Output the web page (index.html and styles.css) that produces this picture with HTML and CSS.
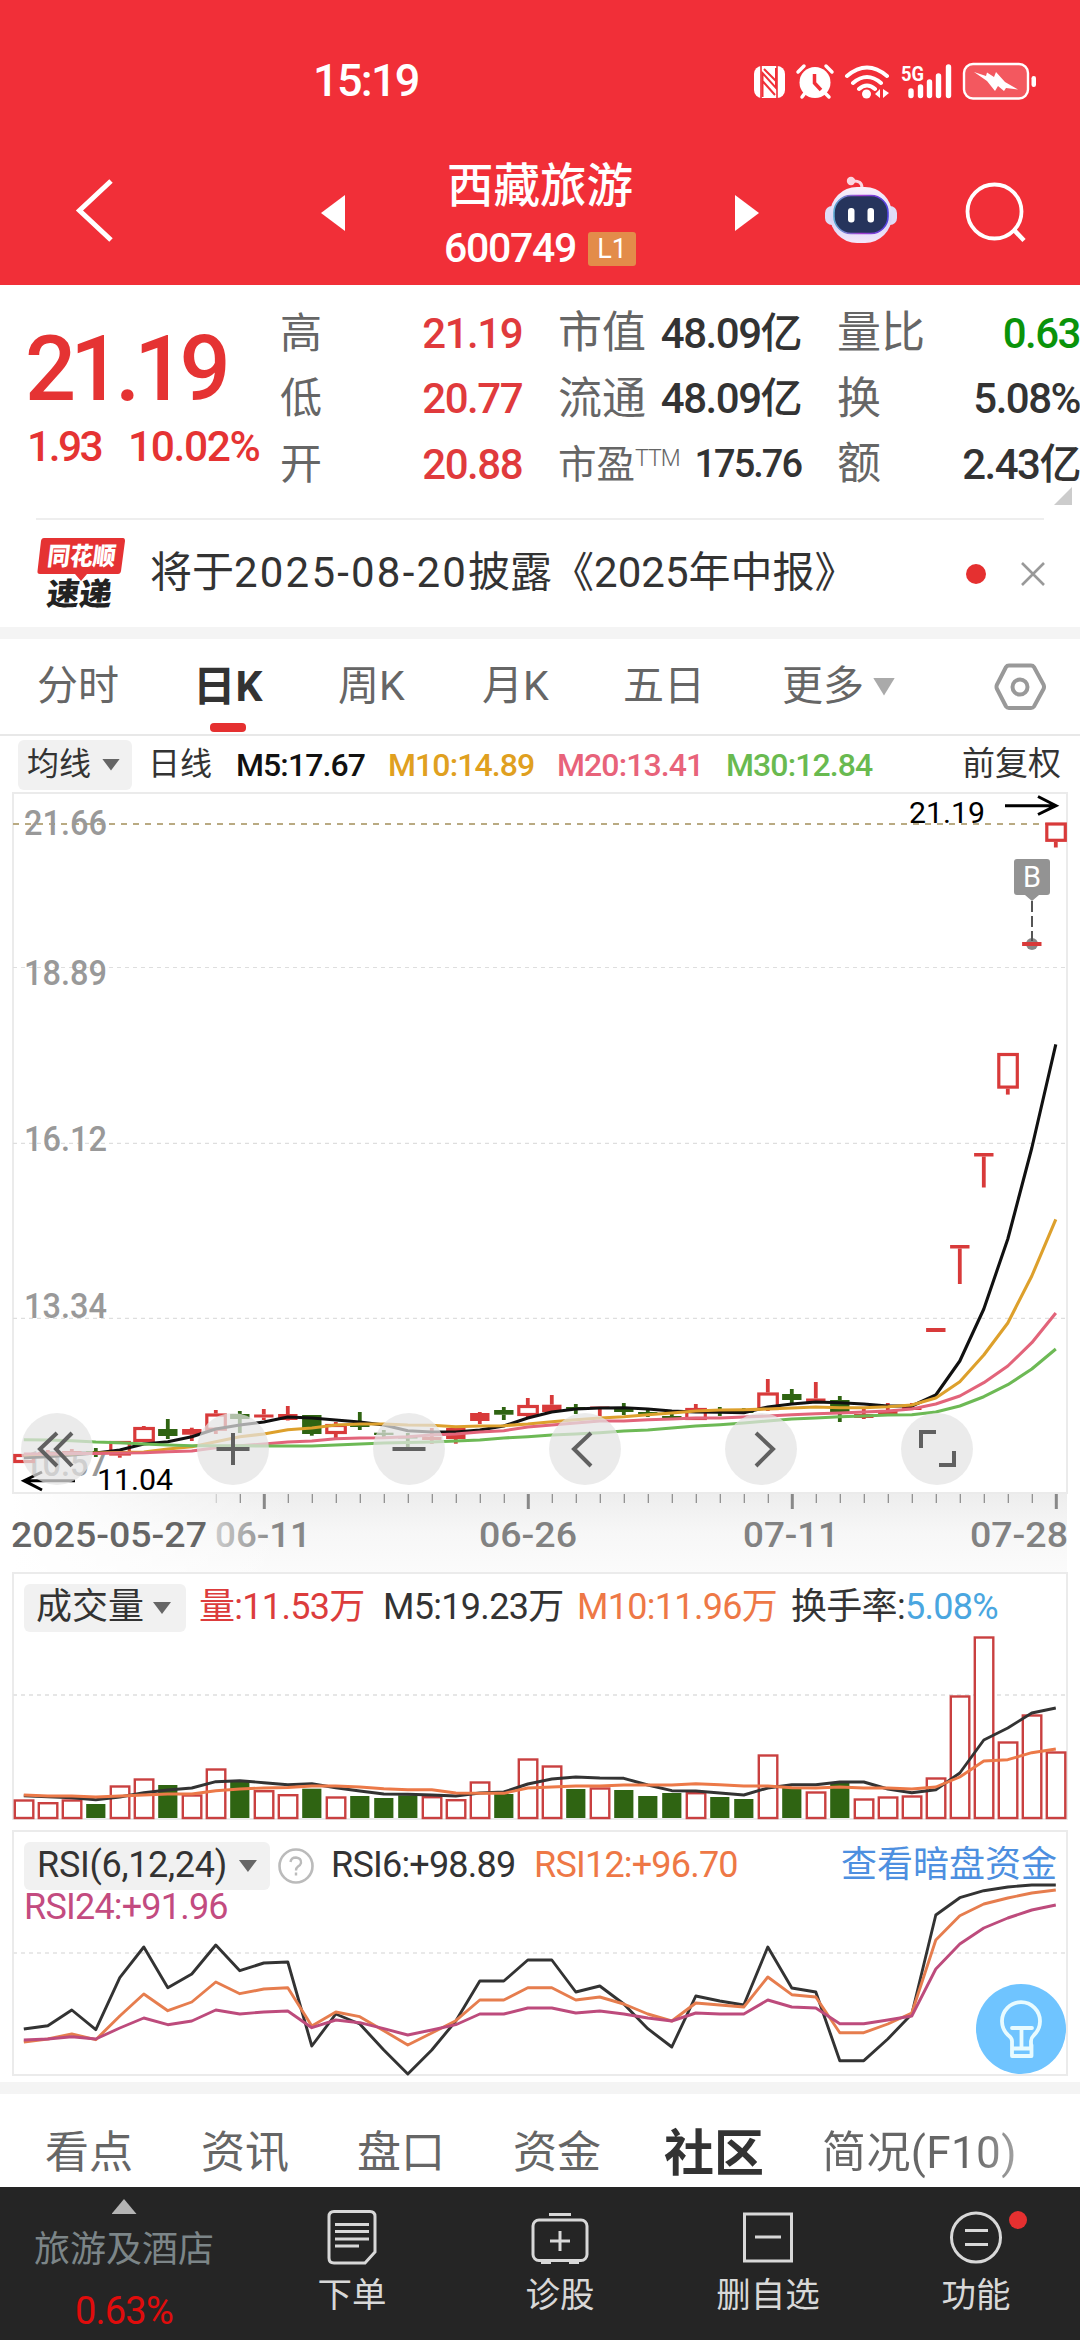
FILE: index.html
```html
<!DOCTYPE html>
<html lang="zh-CN">
<head>
<meta charset="utf-8">
<title>西藏旅游 600749</title>
<link rel="stylesheet" href="styles.css">
</head>
<body>
<header class="header">
  <div class="status">
    <span class="clock">15:19</span>
    <svg class="status-icons" viewBox="750 56 290 48" width="290" height="48">
      <g fill="#fff">
        <rect x="754" y="65" width="31" height="32" rx="8"/>
        <path d="M761 65V97M777 65V97" stroke="#f12f38" stroke-width="1.6"/>
        <path d="M762.500 96V72L776 87V67M762.500 80L775 94M764 68L776 80" fill="none" stroke="#f12f38" stroke-width="2"/>
        <circle cx="815" cy="81.500" r="15.500"/>
        <path d="M798 71L804 65M832 71L826 65M805 92L802 96M825 92L829 96" stroke="#fff" stroke-width="3.500" stroke-linecap="round"/>
        <path d="M814.500 73V82L821 89" fill="none" stroke="#f12f38" stroke-width="3.500"/>
        <path d="M847 75Q867 58 887 75M853 82Q867 70 881 82M859 88Q867 81 875 88" fill="none" stroke="#fff" stroke-width="4" stroke-linecap="round"/>
        <circle cx="866.500" cy="93" r="4.500"/>
        <path d="M880 88V97L875 93ZM883 97V88L889 92Z"/>
        <path d="M911 90V94.500M920.500 86V94.500M929.500 81V94.500M938.500 75V94.500M948.500 66V94.500" stroke="#fff" stroke-width="5.400" stroke-linecap="round"/>
        <text x="901" y="79.500" font-size="21" font-weight="700" textLength="23" lengthAdjust="spacingAndGlyphs">5G</text>
        <rect x="964" y="63" width="64" height="34.500" rx="9" fill="#fff" fill-opacity=".2" stroke="#fff" stroke-width="2.400"/>
        <rect x="1031.500" y="75" width="4.500" height="11" rx="2.200"/>
        <path d="M974 71L986 75L987 71.500L994 76L996 71L1005 81L1018 88.500L1006 87L1004 90L998 85L995 90L987 80Z"/>
      </g>
    </svg>
  </div>
  <nav class="titlebar">
    <svg class="back" width="46" height="72" viewBox="72 174 46 72"><path d="M111 181L79.500 210.500L111 240" fill="none" stroke="#fff" stroke-width="5"/></svg>
    <svg class="prev" width="24" height="36" viewBox="0 0 24 36"><path d="M24 0V36L0 18Z" fill="#fff"/></svg>
    <div class="stock">
      <div class="stock-name">西藏旅游</div>
      <div class="stock-code"><span class="code">600749</span><span class="level">L1</span></div>
    </div>
    <svg class="next" width="24" height="36" viewBox="0 0 24 36"><path d="M0 0V36L24 18Z" fill="#fff"/></svg>
    <svg class="robot" width="76" height="72" viewBox="823 174 76 72">
      <defs>
        <linearGradient id="shell" x1="0" y1="0" x2="0" y2="1"><stop offset="0" stop-color="#faf0fa"/><stop offset=".6" stop-color="#d9d6f4"/><stop offset="1" stop-color="#f4e6fa"/></linearGradient>
        <linearGradient id="rim" x1="0" y1="0" x2="1" y2="0"><stop offset="0" stop-color="#59a8d0"/><stop offset=".5" stop-color="#a43dd0"/><stop offset="1" stop-color="#4e43e0"/></linearGradient>
      </defs>
      <path d="M862 188Q862 180 852 181" fill="none" stroke="#fbd6e0" stroke-width="3"/>
      <circle cx="851" cy="181" r="4.200" fill="#fbd6e0"/>
      <rect x="825" y="206" width="72" height="19" rx="7" fill="#e0dcf6"/>
      <rect x="830" y="187" width="62" height="56" rx="27" fill="url(#shell)"/>
      <rect x="834" y="195.500" width="54" height="38" rx="17" fill="#26345c" stroke="url(#rim)" stroke-width="1.600"/>
      <rect x="848" y="208" width="6.500" height="14.500" rx="3" fill="#fff"/><rect x="867.500" y="208" width="6.500" height="14.500" rx="3" fill="#fff"/>
    </svg>
    <svg class="search" width="62" height="64" viewBox="964 180 62 64"><circle cx="994.500" cy="211.500" r="27" fill="none" stroke="#fff" stroke-width="3.800"/><path d="M1014 230L1024 240.500" stroke="#fff" stroke-width="4.500"/></svg>
  </nav>
</header>

<section class="quote">
  <div class="price">
    <div class="last">21.19</div>
    <div class="change"><span class="diff">1.93</span><span class="pct">10.02%</span></div>
  </div>
  <dl class="stats c1"><dt>高</dt><dd>21.19</dd><dt>低</dt><dd>20.77</dd><dt>开</dt><dd>20.88</dd></dl>
  <dl class="stats c2"><dt>市值</dt><dd>48.09亿</dd><dt>流通</dt><dd>48.09亿</dd><dt class="small">市盈<sup>TTM</sup></dt><dd class="small">175.76</dd></dl>
  <dl class="stats c3"><dt>量比</dt><dd class="down">0.63</dd><dt>换</dt><dd>5.08%</dd><dt>额</dt><dd>2.43亿</dd></dl>
  <i class="corner"></i>
</section>

<section class="news">
  <svg class="news-logo" width="90" height="78" viewBox="36 534 90 78">
    <path d="M44 538H123Q125 538 125 541L121 571Q120.500 574 118 574H87L81 581L75 574H40Q37 574 37.500 571L41 541Q41.500 538 44 538Z" fill="#e53233"/>
    <g transform="skewX(-7)"><text x="116" y="565" font-size="25" font-weight="900" fill="#fff" textLength="68" lengthAdjust="spacingAndGlyphs">同花顺</text><text x="120" y="605" font-size="31" font-weight="900" fill="#222" textLength="65" lengthAdjust="spacingAndGlyphs">速递</text></g>
  </svg>
  <p class="news-text">将于<span class="date">2025-08-20</span>披露《2025年中报》</p>
  <i class="dot"></i>
  <svg class="close" width="26" height="26" viewBox="0 0 26 26"><path d="M2 2L24 24M24 2L2 24" stroke="#999" stroke-width="2.600"/></svg>
</section>

<div class="band"></div>

<nav class="periods">
  <span>分时</span><span class="on">日K</span><span>周K</span><span>月K</span><span>五日</span><span class="more">更多<i class="tri light"></i></span>
  <svg class="gear" width="52" height="48" viewBox="994 663 52 48"><path d="M1009 665.500H1031Q1033 665.500 1034 667L1043.500 684.500Q1044.500 687 1043.500 689L1034 706.500Q1033 708 1031 708H1009Q1007 708 1006 706.500L997 689Q996 687 997 684.500L1006 667Q1007 665.500 1009 665.500Z" fill="none" stroke="#999" stroke-width="4"/><circle cx="1020" cy="687" r="7.500" fill="none" stroke="#999" stroke-width="4"/></svg>
</nav>

<div class="legend ma">
  <span class="select">均线<i class="tri"></i></span><span class="w-day">日线</span><span class="w-m5 black">M5:17.67</span><span class="w-m10 gold">M10:14.89</span><span class="w-m20 pink">M20:13.41</span><span class="w-m30 green">M30:12.84</span><span class="adjust">前复权</span>
</div>

<section class="panel">
  <svg id="kline" class="chart" width="1080" height="780" viewBox="0 792 1080 780"></svg>
  <div class="controls">
    <button><svg viewBox="-36 -36 72 72"><path d="M0 -16L-17 0L0 17M15 -16L-1 0L15 17"/></svg></button>
    <button><svg viewBox="-36 -36 72 72"><path d="M-16.500 0H16.500M0 -16V16"/></svg></button>
    <button><svg viewBox="-36 -36 72 72"><path d="M-16.500 0H16.500"/></svg></button>
    <button><svg viewBox="-36 -36 72 72"><path d="M6 -16L-11 0L6 17"/></svg></button>
    <button><svg viewBox="-36 -36 72 72"><path d="M-5 -16L12 0L-5 17"/></svg></button>
    <button><svg viewBox="-36 -36 72 72"><path d="M-1 -17H-16V-1M17 2V16H2"/></svg></button>
  </div>
</section>

<section class="panel">
  <svg id="volume" class="chart" width="1080" height="258" viewBox="0 1572 1080 258"></svg>
  <div class="legend vol">
    <span class="select">成交量<i class="tri"></i></span><span class="v1 red">量:11.53万</span><span class="v2">M5:19.23万</span><span class="v3 orange">M10:11.96万</span><span class="v4">换手率:<b class="blue">5.08%</b></span>
  </div>
</section>

<section class="panel">
  <svg id="rsi" class="chart" width="1080" height="252" viewBox="0 1830 1080 252"></svg>
  <div class="rsi-head">
    <div class="legend rsi">
      <span class="select">RSI(6,12,24)<i class="tri"></i></span>
      <svg class="help" width="36" height="36" viewBox="0 0 36 36"><circle cx="18" cy="18" r="16.500" fill="none" stroke="#bbb" stroke-width="2.600"/><path d="M12.500 14Q13 9.500 18 9.500Q23.500 10 23 15Q22.500 17 20 18.500Q18 20 18 22.500M18 24.500V27.500" fill="none" stroke="#bbb" stroke-width="2.400"/></svg>
      <span class="r6">RSI6:+98.89</span><span class="r12 orange">RSI12:+96.70</span><a class="link">查看暗盘资金</a>
    </div>
    <div class="r24">RSI24:+91.96</div>
  </div>
  <svg class="bulb" width="90" height="90" viewBox="976 1984 90 90">
    <circle cx="1021" cy="2029" r="45" fill="#6fc4ff"/>
    <path d="M1012 2047V2041Q1012 2038 1008 2035A19 19 0 1 1 1034 2035Q1031 2038 1031 2041V2047M1012 2045V2056H1031.500V2045M1012 2048.500H1031.500M1012 2028H1032M1021.500 2028V2048" fill="none" stroke="#e8fbff" stroke-width="3.800" stroke-linejoin="round" stroke-linecap="round"/>
  </svg>
</section>

<div class="band thin"></div>

<nav class="sections">
  <span>看点</span><span>资讯</span><span>盘口</span><span>资金</span><span class="on">社区</span><span class="last-tab">简况(F10)</span>
</nav>

<footer class="bottom">
  <div class="sector"><i class="up"></i><span class="sector-name">旅游及酒店</span><span class="sector-pct">0.63%</span></div>
  <div class="action"><svg viewBox="-30 -28 60 56"><path d="M-18 -25.500H18Q23 -25.500 23 -20.500V15L13 26H-18Q-23 26 -23 21V-20.500Q-23 -25.500 -18 -25.500Z"/><path d="M-17 -12.500H17M-17 -5.500H17M-17 2H17M-17 9H7"/></svg><span>下单</span></div>
  <div class="action"><svg viewBox="-30 -28 60 56"><rect x="-27" y="-17" width="54" height="40.500" rx="6"/><path d="M-11 -22.500H11M-10 4H10M0 -6V14M-19 25.500H-9M9 25.500H19"/></svg><span>诊股</span></div>
  <div class="action"><svg viewBox="-30 -28 60 56"><rect x="-23.500" y="-23" width="47" height="47"/><path d="M-13 0H13"/></svg><span>删自选</span></div>
  <div class="action"><svg viewBox="-30 -28 60 56"><circle cx="0" cy="0.500" r="24.500"/><path d="M-11 -6.500H12M-11 7.500H12"/></svg><span>功能</span><i class="badge"></i></div>
</footer>
<script src="chart.js"></script>
</body>
</html>
```
FILE: styles.css
```css
* { box-sizing: border-box; margin: 0; padding: 0; }
html, body { width: 1080px; height: 2340px; overflow: hidden; }
body { background: #fff; color: #333; font-family: Roboto, "Noto Sans CJK SC", sans-serif; line-height: 1.2; }
i, b { font-style: normal; font-weight: inherit; }
svg { display: block; flex: none; }
span, dt, dd, a, p { white-space: nowrap; }

.header { height: 285px; background: #f12f38; color: #fff; padding-top: 56px; }
.status { display: flex; align-items: center; justify-content: space-between; height: 50px; padding: 0 40px 0 313px; }
.clock { font-size: 45px; font-weight: 500; letter-spacing: -1.700px; }
.titlebar { display: flex; height: 179px; padding: 0 54px 0 72px; }
.titlebar > * { flex: none; }
.back { margin-top: 68px; }
.prev { margin: 89px 0 0 203px; }
.stock { width: 390px; padding-top: 51px; }
.stock-name { height: 58px; line-height: 58px; text-align: center; font-size: 46.500px; font-weight: 500; }
.stock-code { display: flex; align-items: center; height: 50px; margin-top: 9px; padding-left: 99px; }
.code { width: 144px; font-size: 41px; letter-spacing: -1.300px; font-weight: 500; }
.level { width: 48px; height: 34px; line-height: 34px; background: #e38c4a; border-radius: 3px; text-align: center; font-size: 27px; }
.next { margin-top: 89px; }
.robot { margin: 68px 0 0 64px; }
.search { margin: 74px 0 0 65px; }

.quote { position: relative; display: flex; height: 235px; padding-top: 16px; color: #333; }
.quote::after { content: ""; position: absolute; left: 36px; right: 36px; bottom: 0; height: 2px; background: #eee; }
.price { width: 280px; padding: 23px 0 0 25px; color: #e53333; font-weight: 500; }
.last { height: 92px; line-height: 92px; font-size: 90px; letter-spacing: -6px; }
.change { display: flex; padding-top: 1px; height: 59px; align-items: center; font-size: 42.500px; }
.diff { width: 103px; padding-left: 2px; letter-spacing: -2.500px; }
.pct { letter-spacing: -1.400px; }
.stats { display: grid; grid-template-columns: 80px 1fr; grid-auto-rows: 65.500px; align-items: center; height: 197px; }
.stats dt { color: #666; font-size: 42px; }
.stats dd { font-size: 42px; font-weight: 500; text-align: right; letter-spacing: -1.500px; }
.c1 { width: 242px; }
.c1 dd { color: #e03a3c; }
.c2 { width: 243px; margin-left: 36px; }
.c2 dt, .c3 dt { font-size: 44px; }
.c3 { width: 243px; margin-left: 36px; }
.stats dt.small { font-size: 38.500px; }
.stats dd.small { font-size: 38px; letter-spacing: -2px; }
.stats sup { font-size: 23px; font-weight: 300; line-height: 1; vertical-align: 12px; letter-spacing: -1px; }
.stats .down { color: #0a930a; }
.corner { position: absolute; right: 8px; top: 202px; width: 18px; height: 18px; background: #ccc; clip-path: polygon(100% 0, 100% 100%, 0 100%); }

.news { display: flex; align-items: center; height: 107px; padding-left: 36px; }
.news-logo { margin-bottom: 1px; }
.news-text { width: 840px; padding-left: 24px; font-size: 42px; }
.date { letter-spacing: 2.200px; }
.dot { width: 20px; height: 20px; border-radius: 50%; background: #e53030; }
.close { margin-left: 34px; }
.band { height: 12px; background: #f4f4f4; }

.periods { position: relative; display: flex; align-items: center; height: 97px; border-bottom: 2px solid #e8e8e8; padding-left: 37px; color: #666; font-size: 41px; }
.periods > span { width: 144px; }
.periods > span:nth-child(1) { width: 156px; }
.periods > span:nth-child(2) { width: 145px; font-size: 42.500px; }
.periods > span:nth-child(4) { width: 141px; }
.periods > span:nth-child(5) { width: 159px; }
.periods .more { display: flex; align-items: center; width: 212px; }
.periods .on { position: relative; color: #333; font-weight: 700; }
.periods .on::after { content: ""; position: absolute; left: 17px; bottom: -20px; width: 36px; height: 9px; border-radius: 4px; background: #e53030; }
.tri { display: inline-block; width: 18px; height: 12px; background: #666; clip-path: polygon(0 0, 100% 0, 50% 100%); }
.tri.light { width: 22px; height: 18px; margin-left: 9px; background: #aaa; }

.legend { display: flex; align-items: center; }
.legend > * { flex: none; }
.select { display: flex; align-items: center; background: #f1f1f1; border-radius: 6px; }
.ma { height: 56px; padding-left: 18px; font-size: 32px; }
.ma .select { width: 114px; height: 50px; padding-left: 9px; margin-right: 16px; margin-top: 1px; gap: 11px; }
.w-day { width: 88px; }
.w-m5 { width: 152px; }
.w-m10, .w-m20 { width: 169px; }
.w-m30 { width: 236px; }
.w-m5, .w-m10, .w-m20, .w-m30 { font-weight: 500; letter-spacing: -.9px; padding-top: 2px; }
.black { color: #111; } .gold { color: #e0a020; } .pink { color: #e8637a; } .green { color: #69ba50; }
.adjust { font-size: 33px; }
.red { color: #dc3c3c; } .orange { color: #ee7846; } .blue { color: #4aa6e0; }

.panel { display: grid; }
.panel > * { grid-area: 1 / 1; }
.chart { font-family: Roboto, "Noto Sans CJK SC", sans-serif; }
.controls { display: flex; gap: 104px; padding: 621px 0 0 21px; height: 693px; }
.controls button { width: 72px; height: 72px; border: 0; border-radius: 50%; background: rgba(227, 227, 227, .72); }
.controls path { fill: none; stroke: #606060; stroke-width: 4; }

.vol { height: 48px; margin: 12px 0 0 24px; font-size: 36px; }
.vol .select { width: 162px; height: 48px; padding-left: 12px; gap: 9px; }
.vol > span:not(.select) { letter-spacing: -.7px; }
.v1 { margin-left: 13px; width: 184px; }
.v2 { width: 194px; }
.v3 { width: 214px; }

.rsi-head { padding: 12px 0 0 24px; }
.rsi { height: 48px; font-size: 36px; }
.rsi .select { width: 246px; height: 48px; padding-left: 13px; gap: 12px; letter-spacing: -.3px; }
.rsi .help { margin-left: 8px; }
.rsi .help + span { margin-left: 17px; }
.r6 { width: 203px; letter-spacing: -.8px; }
.r12 { width: 307px; letter-spacing: -.8px; }
.link { color: #4d8fe0; }
.r24 { height: 36px; line-height: 34px; font-size: 36px; color: #c34b80; letter-spacing: -.8px; }
.bulb { margin: 154px 0 0 976px; }

.sections { display: flex; align-items: center; height: 93px; padding: 26px 0 0 45px; font-size: 44px; color: #666; }
.sections > span { width: 156px; }
.sections > span:nth-child(4) { width: 151px; }
.sections > .on { width: 158px; font-size: 50px; font-weight: 700; color: #333; }
.sections .last-tab { width: 200px; letter-spacing: .4px; background: linear-gradient(90deg, #666 75%, #aaa); -webkit-background-clip: text; background-clip: text; color: transparent; }

.bottom { display: grid; grid-template-columns: 248px 208px 208px 208px 208px; height: 153px; background: #252525; color: #d8d8d8; }
.sector { display: flex; flex-direction: column; align-items: center; padding-top: 12px; }
.up { width: 25px; height: 15px; background: #b4b4b4; clip-path: polygon(50% 0, 100% 100%, 0 100%); }
.sector-name { height: 60px; margin-top: 6px; line-height: 60px; font-size: 36px; color: #7c8588; }
.sector-pct { height: 60px; line-height: 60px; margin-top: 1px; font-size: 38px; letter-spacing: -.8px; color: #e00c0c; }
.action { position: relative; display: flex; flex-direction: column; align-items: center; padding-top: 22px; font-size: 34.500px; }
.action svg { width: 60px; height: 56px; fill: none; stroke: #d8d8d8; stroke-width: 3; }
.action span { height: 60px; line-height: 60px; }
.badge { position: absolute; left: 137px; top: 24px; width: 18px; height: 18px; border-radius: 50%; background: #e53030; }
```
FILE: chart.js
```js
const RED = '#d83a3a', GREEN = '#2f6412';
const X = i => 23.8 + 24 * i;
const line = (ys, color, w = 3.1) =>
  `<polyline fill="none" stroke="${color}" stroke-width="${w}" stroke-linejoin="round" points="${ys.map((y, i) => X(i) + ',' + y).join(' ')}"/>`;
const frame = (y1, y2) => `<rect x="13" y="${y1}" width="1054" height="${y2 - y1}" fill="none" stroke="#ebebeb" stroke-width="2"/>`;
const grid = (y, color = '#dedede', w = 1.2, dash = '4 4') =>
  `<path d="M13 ${y}H1067" stroke="${color}" stroke-width="${w}" stroke-dasharray="${dash}"/>`;
const label = (x, y, w, s, size, color, weight = 400) =>
  `<text x="${x}" y="${y}" font-size="${size}" font-weight="${weight}" fill="${color}" textLength="${w}" lengthAdjust="spacingAndGlyphs">${s}</text>`;

// [body top, body bottom, high, low, kind]  kind: h hollow red, r filled red, g green
const candles = [
  [1454, 1463, 1454, 1463, 'h'], [1452, 1456, 1450, 1458, 'r'], [1451, 1454, 1449, 1456, 'r'], [1451, 1454, 1448, 1457, 'g'],
  [1441, 1455.5, 1441, 1457.7, 'h'], [1427, 1442, 1426, 1442, 'h'], [1429, 1436, 1419, 1439, 'g'], [1429, 1434.7, 1427.7, 1441, 'r'],
  [1413.5, 1430.7, 1410, 1434, 'h'], [1414, 1419, 1411, 1433, 'g'], [1414.5, 1417.5, 1409, 1420, 'r'], [1414, 1420, 1406, 1420.5, 'r'],
  [1415, 1434, 1415, 1435.7, 'g'], [1424, 1434, 1422, 1438, 'h'], [1424.5, 1427, 1412, 1430, 'g'], [1432.7, 1435, 1430, 1437, 'g'],
  [1436, 1438.5, 1433, 1447, 'g'], [1437, 1440, 1428, 1444, 'r'], [1428, 1439, 1428, 1443.7, 'r'], [1413, 1421, 1412, 1424, 'r'],
  [1410, 1414.7, 1407, 1420, 'g'], [1405, 1416, 1398, 1417, 'h'], [1404.7, 1412, 1395, 1413, 'r'], [1407, 1409, 1404, 1414, 'g'],
  [1406.5, 1409, 1406.5, 1416, 'r'], [1409, 1412, 1403, 1415, 'g'], [1412, 1415, 1410, 1417, 'g'], [1416, 1418.5, 1414, 1418.5, 'g'],
  [1408, 1420, 1404, 1420, 'h'], [1409, 1411, 1407, 1416, 'g'], [1411, 1413, 1408, 1414, 'g'], [1392.5, 1410, 1379, 1411, 'h'],
  [1394, 1400, 1389, 1403, 'g'], [1398.5, 1402, 1382, 1402, 'r'], [1400, 1412.5, 1396, 1422, 'g'], [1414, 1418, 1407, 1419, 'r'],
  [1410, 1414.5, 1403, 1414.5, 'r'], [1407, 1410, 1403, 1410, 'r'], [1328, 1332, 1328, 1332, 'r'], [1245, 1248.5, 1245, 1284, 'r'],
  [1153, 1156.5, 1153, 1187.5, 'r'], [1053, 1088.6, 1053, 1094.6, 'h'], [942, 946, 942, 946, 'r'], [822.5, 841.8, 822.5, 847.5, 'h']
];
const ma5 = [1457.7,1456.7,1455,1453,1450,1444,1441.7,1436.7,1429,1425,1422,1417,1418,1420,1422,1425,1430.7,1432,1432,1430,1426,1418,1412,1409,1408,1407.7,1409,1411,1412,1412.3,1412.7,1407,1404,1402,1402.7,1404,1406,1406,1395,1361,1309,1239,1148,1044.3];
const ma10 = [1455,1454,1454,1453,1452.5,1452,1449,1446.7,1441.7,1436.7,1434,1429.7,1428,1425,1424,1424,1425,1425.3,1426.7,1426,1425.7,1424,1421.7,1419.7,1418,1416.7,1414.7,1413,1411,1410,1409.7,1409,1408,1407,1407.7,1407.7,1406.7,1405,1398,1381.7,1355,1323,1276,1219.3];
const ma20 = [1454,1454,1453.5,1453.5,1453,1452.7,1451.7,1451,1447.7,1445.7,1444,1442,1441,1438.7,1438,1437.7,1436.7,1435,1434,1432,1430.7,1427,1425,1423,1421,1421,1419.7,1419,1418,1418,1417,1416,1414.7,1413.7,1413,1412,1411,1409,1404,1396,1382.7,1366,1342.7,1313];
const ma30 = [1439.7,1440,1440.7,1442,1442.7,1444,1445,1445.7,1445.7,1445.7,1446,1446,1446,1445,1444,1443,1442.5,1442,1441,1440,1438,1436.7,1435,1434,1432.7,1431,1430,1428,1426,1424.7,1423,1421,1419,1418,1416.7,1416,1415,1414.7,1412,1406,1396.7,1384.7,1369,1349];

let k = `<defs>
<linearGradient id="axisV" x1="0" y1="0" x2="0" y2="1"><stop offset="0" stop-color="#ededed"/><stop offset=".5" stop-color="#f7f7f7"/><stop offset="1" stop-color="#fbfbfb"/></linearGradient>
<linearGradient id="axisH" x1="0" y1="0" x2="1" y2="0"><stop offset="0" stop-color="#fff"/><stop offset="1" stop-color="#fff" stop-opacity="0"/></linearGradient></defs>
<rect x="13" y="1493" width="1054" height="80" fill="url(#axisV)"/><rect x="12" y="1494" width="280" height="78" fill="url(#axisH)"/>`;
k += frame(793, 1493) + grid(824, '#b9aa82', 2, '6 6') + grid(967.5) + grid(1143.3) + grid(1318.3);
[['21.66', 835], ['18.89', 985], ['16.12', 1151], ['13.34', 1318], ['10.57', 1476]].forEach(([s, y]) => k += label(24, y, 83, s, 35.5, '#999', 500));
k += '<circle cx="1032" cy="944" r="6" fill="#888"/>';
candles.forEach(([t, b, hi, lo, kind], i) => {
  const x = X(i), c = kind === 'g' ? GREEN : RED;
  if (hi < t) k += `<path d="M${x} ${hi}V${t}" stroke="${c}" stroke-width="3.800"/>`;
  if (lo > b) k += `<path d="M${x} ${b}V${lo}" stroke="${c}" stroke-width="3.800"/>`;
  k += kind === 'h'
    ? `<rect x="${x - 9}" y="${t + 1.5}" width="18.500" height="${b - t - 3}" fill="#fff" stroke="${c}" stroke-width="3.200"/>`
    : `<rect x="${x - 9.7}" y="${t}" width="19.400" height="${b - t}" fill="${c}"/>`;
});
k += line(ma5, '#111') + line(ma10, '#dda02c') + line(ma20, '#e2647a') + line(ma30, '#6db955');
k += label(909, 822.5, 76, '21.19', 30, '#000') + label(97, 1489.5, 76, '11.04', 30, '#000');
k += '<path d="M1005 805.700H1055M1038 796.500L1056 805.700L1038 814.500M75 1480.700H25M42 1472L24 1480.700L42 1490" fill="none" stroke="#000" stroke-width="3"/>';
k += '<path d="M1017 859H1047Q1050 859 1050 862V892Q1050 895 1047 895H1039L1032 901L1025 895H1017Q1014 895 1014 892V862Q1014 859 1017 859Z" fill="#939393"/>';
k += label(1023, 887, 18, 'B', 30, '#fff') + '<path d="M1032 901V941" stroke="#555" stroke-width="2" stroke-dasharray="11 4"/>';
for (let i = 8; i < 44; i++) {
  const major = [10, 21, 32, 43].includes(i);
  k += `<path d="M${X(i) + 0.5} 1494V${major ? 1509 : 1503}" stroke="${i === 8 ? '#ccc' : '#888'}" stroke-width="${major ? 3 : 1.2}"/>`;
}
k += label(11, 1547, 196, '2025-05-27', 35.5, '#666', 500)
  + '<linearGradient id="fade" gradientUnits="userSpaceOnUse" x1="215" y1="0" x2="275" y2="0"><stop offset="0" stop-color="#ccc"/><stop offset="1" stop-color="#888"/></linearGradient>'
  + label(215, 1547, 96, '06-11', 35.5, 'url(#fade)', 500) + label(479, 1547, 98, '06-26', 35.5, '#828282', 500)
  + label(743, 1547, 96, '07-11', 35.5, '#828282', 500) + label(970, 1547, 98, '07-28', 35.5, '#828282', 500);
document.getElementById('kline').innerHTML = k;

const volTop = [1800,1802.7,1800,1804,1786,1779,1785,1795,1769,1781.7,1790.7,1794.7,1788.7,1797,1796,1798,1795.3,1796.7,1799.7,1782,1794,1759,1766,1789,1788,1790,1796,1793,1792.7,1797,1799,1755,1787,1792,1782.7,1799,1797,1796,1778,1696,1637,1742,1715,1752];
const volGreen = new Set([3, 6, 9, 12, 14, 15, 16, 20, 23, 25, 26, 27, 29, 30, 32, 34]);
const vm5 = [1795.7,1796.7,1797.7,1799.7,1797,1792.7,1790,1788,1781.7,1780.7,1782.7,1784.7,1783.7,1787.7,1791,1794,1794.3,1795,1796,1793,1792,1784,1779,1777,1778,1778.3,1785,1790.7,1791,1793,1795,1788,1784.7,1784.7,1782,1782,1789,1792.7,1789.7,1773,1740,1728,1713,1708];
const vm10 = [1795,1796,1796,1797,1796,1795,1794,1794,1790.7,1789,1788,1787.5,1786,1786,1787,1788.7,1789.7,1789.7,1793,1793.3,1793.3,1788,1787,1786,1786,1785,1785,1785,1783.7,1784.7,1786,1786,1787.7,1788,1787,1788,1788,1789,1787,1777,1761,1759.7,1752.7,1749];
let v = frame(1573, 1819) + grid(1695, '#e6e6e6', 2);
volTop.forEach((t, i) => {
  v += volGreen.has(i)
    ? `<rect x="${X(i) - 9.6}" y="${t}" width="19.200" height="${1818 - t}" fill="${GREEN}"/>`
    : `<rect x="${X(i) - 9}" y="${t + 0.5}" width="18.500" height="${1817.5 - t}" fill="#fff" stroke="#c94040" stroke-width="2.400"/>`;
});
v += line(vm5, '#333', 2.9) + line(vm10, '#ec7948', 2.9);
document.getElementById('volume').innerHTML = v;

const r6 = [2029,2025.7,2010,2029.7,1977.7,1947,1987.7,1974,1945,1970.7,1963,1962,2046,2014,2024,2050,2074,2050,2021,1981,1981,1960,1960,1992,1986,2004,2028.7,2047,1996,2001,2005,1947,1988,1992,2060.7,2060.7,2039,2014,1915,1897.7,1890.7,1887,1885,1885];
const r12 = [2042,2039,2034,2039.7,2016,1994,2010.7,2002,1982,1993.7,1989,1987.7,2026,2012,2016.7,2030.7,2045,2033,2020.7,2000,2000,1987.7,1987.7,2000,1997,2004,2014,2021,2003,2005,2007,1977,1994.7,1997,2032.7,2032.7,2024,2013,1940,1915.7,1904,1898,1893,1890];
const r24 = [2040,2039,2036.7,2039,2028,2018,2024.7,2021,2010,2014,2012,2011,2027.7,2020,2022.7,2028.7,2035,2030,2024.7,2014,2014,2008,2008,2013,2011,2014,2018,2021,2013,2014,2014,2000,2007,2008,2023.7,2023.7,2020,2016,1969,1944,1928,1918,1910,1905];
document.getElementById('rsi').innerHTML = frame(1831, 2075) + grid(1953, '#e9e9e9', 2) + line(r6, '#333', 2.9) + line(r12, '#e67d4e', 2.9) + line(r24, '#bd4b7c', 2.9);
```
